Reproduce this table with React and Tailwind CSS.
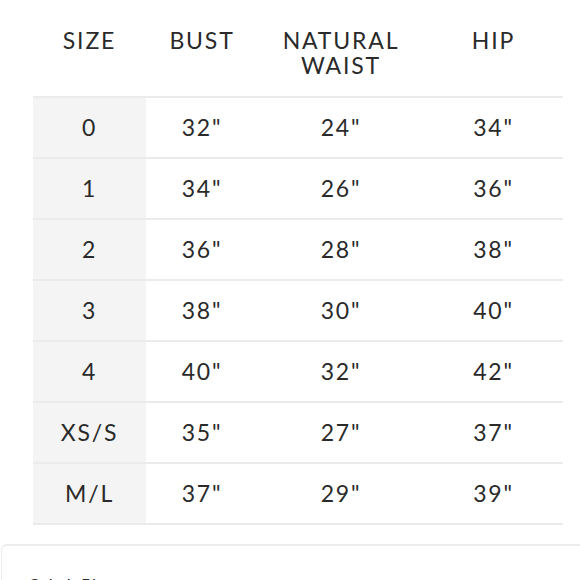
import React from "react";

const rows = [
  ["0", "32\"", "24\"", "34\""],
  ["1", "34\"", "26\"", "36\""],
  ["2", "36\"", "28\"", "38\""],
  ["3", "38\"", "30\"", "40\""],
  ["4", "40\"", "32\"", "42\""],
  ["XS/S", "35\"", "27\"", "37\""],
  ["M/L", "37\"", "29\"", "39\""],
];

export default function App() {
  return (
    <div
      className="w-[580px] h-[580px] overflow-hidden bg-white text-[#2a2a2a]"
      style={{ fontFamily: "Lato, 'Open Sans', sans-serif" }}
    >
      <div className="ml-[33px] w-[530px]">
        <div className="grid grid-cols-[113px_112px_166px_139px] h-[96px] pt-[28px] text-[23px] leading-[25px] tracking-[0.08em] text-center">
          <div>SIZE</div>
          <div>BUST</div>
          <div className="flex flex-col">
            <span>NATURAL</span>
            <span>WAIST</span>
          </div>
          <div>HIP</div>
        </div>
        <div className="border-b-2 border-[#ebebeb]">
          {rows.map((r, i) => (
            <div
              key={i}
              className="grid grid-cols-[113px_112px_166px_139px] h-[61px] border-t-2 border-[#ebebeb] text-[23px] tracking-[0.08em] text-center items-center"
            >
              <div className="h-full flex items-center justify-center bg-[#f4f4f4]">{r[0]}</div>
              <div>{r[1]}</div>
              <div>{r[2]}</div>
              <div>{r[3]}</div>
            </div>
          ))}
        </div>
      </div>
      <div className="mt-[19px] ml-[1px] border-t-2 border-l border-[#ececec] rounded-tl-[6px] h-[60px] pl-[26px] pt-[27px] text-[17px] leading-[25px] text-[#2a2a2a]">
        Cobalt Blue
      </div>
    </div>
  );
}
